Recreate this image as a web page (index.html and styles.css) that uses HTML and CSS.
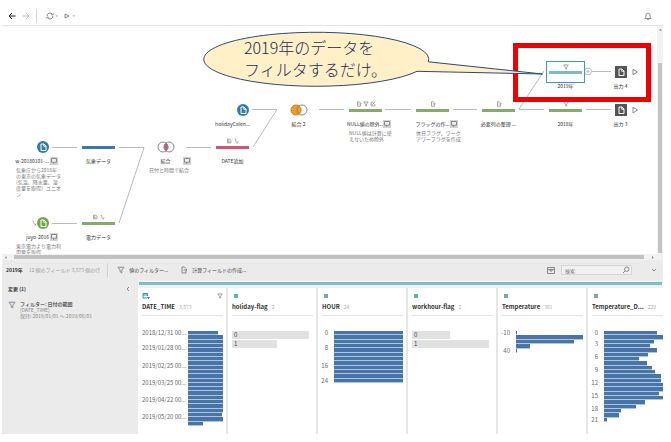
FILE: index.html
```html
<!DOCTYPE html>
<html lang="ja">
<head>
<meta charset="utf-8">
<title>フロー</title>
<link rel="stylesheet" href="styles.css">
</head>
<body>
<svg class="defs" aria-hidden="true">
  <symbol id="filter" viewBox="0 0 8 8"><path d="M1 1.2h6L4.8 4.2v2.6l-1.6-.8V4.2z"/></symbol>
  <symbol id="calc" viewBox="0 0 8 8"><path d="M4.5 1H2v6h4V5M4.5 1L6 2.5M3.5 4H7M5.8 2.8L7 4 5.8 5.2"/></symbol>
  <symbol id="edit" viewBox="0 0 8 8"><path d="M5 1.5H1.5v5h5V4M3 5l4-4"/></symbol>
  <symbol id="clip" viewBox="0 0 8 8"><path d="M2 1.5a1.2 1.2 0 1 1 1 2.2L6.5 7M5 7l2-2.5"/></symbol>
  <symbol id="clock" viewBox="0 0 8 8"><path d="M2 1.5h3.5L6.5 3v3.500H2zM3.500 3v2h1.500"/></symbol>
  <symbol id="note" viewBox="0 0 8 8"><rect width="8" height="8" fill="#d2d2d2" stroke="none"/><path d="M1.500 1.500h5v3.700H4.500L3.500 6.500V5.200h-2z" fill="#eee"/></symbol>
  <symbol id="play" viewBox="0 0 8 8"><path d="M2 1.200L6.500 4 2 6.800z"/></symbol>
  <symbol id="doc" viewBox="0 0 12 12"><path d="M4 3h3l2 2v4.500H4zM6.800 3v2.200H9"/></symbol>
</svg>

<main class="app">
  <header class="toolbar">
    <button aria-label="戻る"><svg class="dark" width="8" height="8" viewBox="0 0 8 8"><path d="M7.500 4H1M4 1L1 4l3 3"/></svg></button>
    <button aria-label="進む"><svg class="pale" width="8" height="8" viewBox="0 0 8 8"><path d="M.5 4H7M4 1l3 3-3 3"/></svg></button>
    <span class="divider"></span>
    <button aria-label="更新"><svg width="12" height="8" viewBox="0 0 12 8"><path d="M1 4a3 3 0 0 1 5.500-1.700M7 4a3 3 0 0 1-5.500 1.700M7.500 1.500l-.7 1.500-1.500-.3M.5 6.500l.8-1.500 1.500.3"/><path class="solid" d="M9.500 3.500h2.500l-1.200 1.200z"/></svg></button>
    <button aria-label="実行"><svg width="12" height="8" viewBox="0 0 12 8"><path d="M1 2l4 2-4 2z"/><path class="solid" d="M8.500 3.500H11l-1.200 1.200z"/></svg></button>
    <button class="bell" aria-label="通知"><svg width="8" height="8" viewBox="0 0 8 8"><path d="M.8 6.500c1-1 1.200-2 1.200-3.500a2 2 0 0 1 4 0c0 1.500.2 2.500 1.200 3.500zM3.300 7.500h1.400"/></svg></button>
  </header>

  <section class="flow">
    <div class="canvas">
      <div class="stage">
        <svg class="edges" width="660" height="260" viewBox="0 0 660 260">
          <path d="M52 147.500h25M119 147.500h25L119 223M52 223.500h25M186 147.500h25M253 147l24-37.500M252 109.500h25M319 109.500h25M385 109.500h26M453 109.500h24M519 109.500h25M519 109l25-38M592 71.500h19M586 109.500h25"/>
          <circle cx="588" cy="71.500" r="3.500"/><path d="M586.500 71.500h3M588 70v3"/>
        </svg>

        <div class="node weather-src"><div class="glyph"><svg class="disc blue" width="12" height="12"><use href="#doc"/></svg></div>
          <div class="name"><span>w-20180101-...</span><svg class="mini"><use href="#note"/></svg></div>
          <p>気象庁から2018年<br>の東京の気象データ<br>(気温、降水量、湿<br>度量を取得）ユニオ<br>ン</p></div>
        <div class="node weather"><div class="glyph"><i class="bar blue"></i></div><div class="name"><span>気象データ</span></div></div>
        <div class="node power-src"><div class="glyph"><svg class="tiny"><use href="#clip"/></svg><svg class="disc green" width="12" height="12"><use href="#doc"/></svg></div>
          <div class="name"><span>juyo-2016</span><svg class="mini"><use href="#note"/></svg></div>
          <p>東京電力より電力利<br>用量を取得</p></div>
        <div class="node power"><div class="glyph"><div class="badges"><svg class="tiny"><use href="#clock"/></svg><svg class="tiny"><use href="#clip"/></svg></div><i class="bar green"></i></div><div class="name"><span>電力データ</span></div></div>
        <div class="node join"><div class="glyph"><svg width="18" height="12" viewBox="0 0 18 12"><path class="red" d="M9 1.800a5 5 0 0 1 0 8.400a5 5 0 0 1 0-8.400"/><circle cx="6" cy="6" r="5"/><circle cx="12" cy="6" r="5"/></svg></div>
          <div class="name"><span>結合</span><svg class="mini"><use href="#note"/></svg></div><p>日付と時間で結合</p></div>
        <div class="node date-add"><div class="glyph"><div class="badges"><svg class="tiny"><use href="#clock"/></svg><svg class="tiny"><use href="#clip"/></svg></div><i class="bar red"></i></div><div class="name"><span>DATE追加</span></div></div>
        <div class="node holiday-src"><div class="glyph"><svg class="disc blue" width="12" height="12"><use href="#doc"/></svg></div><div class="name"><span>holidayCalen...</span></div></div>
        <div class="node join-two"><div class="glyph"><svg width="18" height="12" viewBox="0 0 18 12"><circle class="orange" cx="6" cy="6" r="5"/><circle cx="12" cy="6" r="5"/></svg></div><div class="name"><span>結合 2</span></div></div>
        <div class="node null-out"><div class="glyph"><div class="badges"><svg class="tiny"><use href="#calc"/></svg><svg class="tiny"><use href="#filter"/></svg><svg class="tiny"><use href="#edit"/></svg></div><i class="bar green"></i></div>
          <div class="name"><span>NULL値の除外...</span><svg class="mini"><use href="#note"/></svg></div><p>NULL値は計算に使<br>えないため除外</p></div>
        <div class="node flags"><div class="glyph"><div class="badges"><svg class="tiny"><use href="#calc"/></svg></div><i class="bar green"></i></div>
          <div class="name"><span>フラッグの作...</span><svg class="mini"><use href="#note"/></svg></div><p>休日フラグ、ワーク<br>アワーフラグを作成</p></div>
        <div class="node columns"><div class="glyph"><div class="badges"><svg class="tiny"><use href="#calc"/></svg></div><i class="bar green"></i></div><div class="name"><span>必要列の整理 ...</span></div></div>
        <div class="node y2018"><div class="glyph"><div class="badges"><svg class="tiny"><use href="#filter"/></svg></div><i class="bar green"></i></div><div class="name"><span>2018年</span></div></div>
        <div class="node out3"><div class="glyph"><svg class="output" width="12" height="12"><use href="#doc"/></svg><svg class="run"><use href="#play"/></svg></div><div class="name"><span>出力 3</span></div></div>
        <div class="node y2019 selected"><div class="glyph"><div class="badges"><svg class="tiny"><use href="#filter"/></svg></div><i class="bar teal"></i></div><div class="name"><span>2019年</span></div></div>
        <div class="node out4"><div class="glyph"><svg class="output" width="12" height="12"><use href="#doc"/></svg><svg class="run"><use href="#play"/></svg></div><div class="name"><span>出力 4</span></div></div>

        <div class="highlight"></div>
        <svg class="callout" width="660" height="100" viewBox="0 0 660 100"><path d="M428.300 61.800L542.500 74L417 71.300A112.500 27 0 1 1 428.300 61.800z"/></svg>
        <div class="callout-text">2019年のデータを<br>フィルタするだけ。</div>
      </div>
    </div>
    <div class="vscroll"><svg width="5" height="5"><path d="M1 3.500h3L2.500 2z"/></svg><div class="thumb"></div></div>
  </section>
  <div class="hscroll"><svg width="5" height="5"><path d="M3.500 1v3L2 2.500z"/></svg><div class="thumb"></div><svg width="5" height="5"><path d="M2 1v3l1.500-1.500z"/></svg></div>

  <section class="details">
    <div class="actions">
      <strong>2019年</strong><span class="meta">12 個のフィールド 3,573 個の行</span>
      <span class="divider"></span>
      <button class="filter-btn"><svg width="8" height="8"><use href="#filter"/></svg>値のフィルター...</button>
      <button><svg width="8" height="8"><use href="#calc"/></svg>計算フィールドの作成...</button>
      <button class="view" aria-label="表示"><svg width="8" height="8" viewBox="0 0 8 8"><path d="M.5 1.500h7v6h-7zM.5 3.500h7M3 3.500v1.500h2v-1.500"/></svg></button>
      <label class="search"><input type="text" placeholder="検索" aria-label="検索"><svg width="8" height="8" viewBox="0 0 8 8"><circle cx="4.800" cy="3.200" r="2.200"/><path d="M3.200 4.800L1 7"/></svg></label>
      <button class="collapse" aria-label="折りたたむ"><svg width="6" height="6" viewBox="0 0 6 6"><path d="M1 2l2 2 2-2"/></svg></button>
    </div>
    <div class="body">
      <aside class="changes">
        <h2>変更 (1)<button aria-label="閉じる"><svg width="6" height="6" viewBox="0 0 6 6"><path d="M4 1L2 3l2 2"/></svg></button></h2>
        <div class="change"><svg width="8" height="8"><use href="#filter"/></svg>
          <div><b>フィルター: 日付の範囲</b><span>[DATE_TIME]</span><span>保持: 2019/01/01 ～ 2019/06/01</span></div></div>
      </aside>
      <div class="profile">
        <div class="band"></div>
        <div class="cards">
          <article class="card">
            <div class="type"><svg width="8" height="8" viewBox="0 0 8 8"><path class="cyan" d="M5 6H1V1.500h4.500V4M1 3h4.500M5 5.500h2.500M6 7l1.500-1.500"/></svg><svg class="tiny"><use href="#filter"/></svg></div>
            <h3>DATE_TIME<small>3,573</small></h3>
            <div class="hist dates" data-rows="22" data-bars="86,100,100,100,100,100,100,100,100,100,100,100,100,100,100,100,100,100,100,98,100,43" data-ticks="1:2018/12/31 00...,4:2019/01/28 00...,8:2019/02/25 00...,12:2019/03/25 00...,16:2019/04/22 00...,20:2019/05/20 00..."></div>
          </article>
          <article class="card">
            <div class="type"><i class="dot"></i></div>
            <h3>holiday-flag<small>2</small></h3>
            <div class="values"><div class="full">0</div><div class="part">1</div></div>
          </article>
          <article class="card">
            <div class="type"><i class="dot slate"></i></div>
            <h3>HOUR<small>24</small></h3>
            <div class="hist hours" data-rows="12" data-bars="100,100,100,100,100,100,100,100,100,100,100,100" data-ticks="1:0,4:8,8:16,12:24"></div>
          </article>
          <article class="card">
            <div class="type"><i class="dot mint"></i></div>
            <h3>workhour-flag<small>2</small></h3>
            <div class="values"><div class="half">0</div><div class="full">1</div></div>
          </article>
          <article class="card">
            <div class="type"><i class="dot slate"></i></div>
            <h3>Temperature<small>301</small></h3>
            <div class="hist temps" data-rows="5" data-bars="1,100,86,21,1" data-ticks="1:-10,5:40"></div>
          </article>
          <article class="card last">
            <div class="type"><i class="dot slate"></i></div>
            <h3>Temperature_D...<small>229</small></h3>
            <div class="hist dews" data-rows="21" data-bars="89,100,85,78,89,75,60,73,81,87,97,97,100,100,93,100,70,55,28,26,5" data-ticks="1:0,3:3,6:6,9:9,12:12,15:15,18:18,21:21"></div>
          </article>
        </div>
      </div>
    </div>
  </section>
</main>
<script src="app.js"></script>
</body>
</html>
```
FILE: app.js
```js
// Fills each histogram with its bars and axis ticks.
document.querySelectorAll('.hist').forEach(function (hist) {
  var rows = Number(hist.dataset.rows);
  hist.dataset.bars.split(',').forEach(function (width, i) {
    var cell = document.createElement('div');
    cell.className = 'cell';
    cell.style.gridRow = String(i + 1);
    var fill = document.createElement('i');
    fill.style.width = width + '%';
    cell.appendChild(fill);
    hist.appendChild(cell);
  });
  hist.dataset.ticks.split(',').forEach(function (entry) {
    var at = entry.indexOf(':');
    var row = Number(entry.slice(0, at));
    var tick = document.createElement('span');
    tick.textContent = entry.slice(at + 1);
    tick.style.gridRow = row === 1 || row === rows ? String(row) : row + ' / span 2';
    hist.appendChild(tick);
  });
});
```
FILE: styles.css
```css
* { box-sizing: border-box; }
body {
  margin: 0;
  background: #fff;
  color: #444;
  font: 5px/6px "Noto Sans CJK JP", sans-serif;
}
button {
  display: flex;
  align-items: center;
  padding: 0;
  border: 0;
  background: none;
  color: inherit;
  font: inherit;
}
svg { display: block; flex: none; fill: none; stroke: #888; stroke-width: 1; }
.defs { position: absolute; width: 0; height: 0; stroke: inherit; }
.dark { stroke: #222; }
.pale { stroke: #bbb; }
.solid { fill: #999; stroke: none; }
.divider { width: 1px; background: #d4d4d4; }

.app { margin: 0 8px 8px 2px; }
.toolbar {
  display: flex;
  align-items: center;
  gap: 6px;
  height: 26px;
  padding: 6px 11px 0 6px;
  border-bottom: 1px solid #e4e4e4;
}
.toolbar .divider { height: 14px; }
.toolbar .divider + button { margin-left: 3px; }
.bell { margin-left: auto; }

.flow { display: flex; height: 228px; }
.canvas { position: relative; flex: 1; overflow: hidden; }
.stage { position: absolute; left: -2px; top: -26px; width: 660px; height: 260px; }
.edges, .callout { position: absolute; left: 0; top: 0; }
.edges { stroke: #bbb; }

.node { position: absolute; width: 48px; }
.glyph {
  position: relative;
  display: flex;
  align-items: center;
  justify-content: center;
  width: 33px;
  height: 20px;
}
.badges { position: absolute; top: 1px; left: 0; display: flex; justify-content: center; gap: 1px; width: 33px; }
.tiny { width: 6px; height: 6px; }
.mini { position: absolute; left: 34px; width: 8px; height: 8px; }
.bar { width: 33px; height: 3px; }
.bar.blue { background: #3a78a8; }
.bar.green { background: #83ab6a; }
.bar.red { background: #cc5876; }
.bar.teal { background: #7dbcc2; }
.name { position: relative; display: flex; justify-content: center; width: 33px; line-height: 8px; white-space: nowrap; color: #333; }
.node p { margin: 2px 0 0; color: #777; white-space: nowrap; }
.disc { border-radius: 50%; stroke: #fff; }
.disc.blue { background: #2f7da3; }
.disc.green { background: #6fa84e; }
.output { background: #555; stroke: #fff; }
.run { position: absolute; left: 27px; width: 8px; height: 8px; }
.node circle { stroke: #888; }
.node .red { fill: #cc5876; stroke: none; }
.node .orange { fill: #f39a27; stroke: #c87d20; }

.weather-src { left: 16px; top: 137px; }
.power-src { left: 16px; top: 213px; }
.holiday-src { left: 216px; top: 100px; }
.weather-src .glyph, .power-src .glyph, .holiday-src .glyph { justify-content: flex-end; }
.weather-src .name, .power-src .name { justify-content: flex-end; }
.weather { left: 82px; top: 137px; }
.power { left: 82px; top: 213px; }
.join { left: 149px; top: 137px; }
.date-add { left: 216px; top: 137px; }
.join-two { left: 282px; top: 100px; }
.null-out { left: 349px; top: 100px; }
.flags { left: 416px; top: 100px; }
.columns { left: 482px; top: 100px; }
.y2018 { left: 549px; top: 100px; }
.out3 { left: 604px; top: 100px; }
.y2019 { left: 549px; top: 62px; }
.out4 { left: 604px; top: 62px; }
.selected .glyph { outline: 1px solid #3b97cf; outline-offset: 2px; height: 16px; margin: 2px 0; }
.selected .badges { top: 0; }

.highlight { position: absolute; left: 513px; top: 43px; width: 138px; height: 59px; border: 5px solid #f00000; }
.callout { fill: #fff0c8; stroke: #2f4870; }
.callout-text { position: absolute; left: 244px; top: 36px; color: #1b2a55; font-size: 16px; font-weight: 300; line-height: 22px; white-space: nowrap; }

.vscroll { width: 6px; background: #f2f2f2; padding: 1px 0 0 1px; }
.vscroll .thumb { width: 4px; height: 190px; margin-top: 31px; background: #c4c4c4; }
.vscroll svg, .hscroll svg { fill: #777; stroke: none; }
.hscroll { display: flex; align-items: center; gap: 6px; height: 6px; padding: 0 8px 0 1px; background: #f2f2f2; }
.hscroll .thumb { flex: 1; height: 4px; background: #c1c1c1; }

.actions { display: flex; align-items: center; height: 20px; padding: 0 6px 0 4px; background: #ebebeb; }
.actions strong { margin-right: 6px; color: #333; }
.meta { color: #999; }
.actions .divider { height: 14px; margin: 0 9px 0 7px; }
.actions button { gap: 4px; }
.actions .filter-btn { margin-right: 12px; }
.actions .view { margin-left: auto; }
.search { display: flex; align-items: center; width: 71px; height: 10px; margin: 0 19px 0 6px; padding: 0 1px 0 3px; border: 1px solid #d6d6d6; background: #f1f1f1; }
.search input { flex: 1; min-width: 0; height: 8px; padding: 0; border: 0; background: none; font: inherit; }
.search input::placeholder { color: #777; }

.body { display: flex; height: 154px; }
.changes { flex: none; width: 136px; padding: 5px 7px 0 6px; background: #ebebeb; }
.changes h2 { display: flex; justify-content: space-between; align-items: center; height: 8px; margin: 0 0 8px; color: #333; font-size: 5px; line-height: 8px; }
.change { display: flex; gap: 4px; }
.change div { display: grid; }
.change b { color: #333; font-weight: 500; }
.change span { color: #888; }

.profile { flex: 1; min-width: 0; display: flex; flex-direction: column; background: #edf3f5; }
.band { flex: none; height: 3px; margin: 2px 1px 3px; background: #83bdc2; }
.cards { flex: 1; display: grid; grid-template-columns: repeat(5, 90fr) 75fr; background: #fff; }
.card { min-width: 0; overflow: hidden; padding: 4px 3px 0 4px; border-right: 2px solid #e6e6e6; }
.card.last { border: 0; padding-right: 0; }
.type { display: flex; align-items: center; justify-content: space-between; height: 8px; }
.dot { width: 4px; height: 4px; margin-left: 2px; background: #5fb2c4; }
.dot.slate { background: #7fa3bd; }
.dot.mint { background: #63b890; }
.cyan { stroke: #2f93b0; }
.card h3 { display: flex; gap: 4px; margin: 3px 0 15px; padding-bottom: 4px; border-bottom: 1px solid #e2e2e2; color: #333; font-size: 6px; line-height: 8px; white-space: nowrap; }
.card small { color: #aaa; font-size: 5px; font-weight: 400; }
.hist { display: grid; grid-auto-rows: 1fr; column-gap: 6px; color: #666; }
.hist span { grid-column: 1; align-self: center; justify-self: end; height: 4px; font-size: 6px; line-height: 4px; white-space: nowrap; }
.cell { grid-column: 2; min-height: 0; display: flex; }
.cell i { border-bottom: 1px solid #a9c6e2; background: #4a74a6; }
.dates { grid-template-columns: 44px 1fr; column-gap: 2px; height: 95px; }
.dates span { justify-self: start; }
.hours { grid-template-columns: 6px 1fr; height: 52px; }
.temps { grid-template-columns: 8px 1fr; height: 22px; }
.dews { grid-template-columns: 6px 1fr; height: 91px; }
.values { display: grid; gap: 1px; }
.values div { height: 8px; padding-left: 2px; background: #e1e1e1; font-size: 6px; line-height: 8px; }
.values .full { width: 95%; }
.values .part { width: 56%; }
.values .half { width: 47%; }
```
